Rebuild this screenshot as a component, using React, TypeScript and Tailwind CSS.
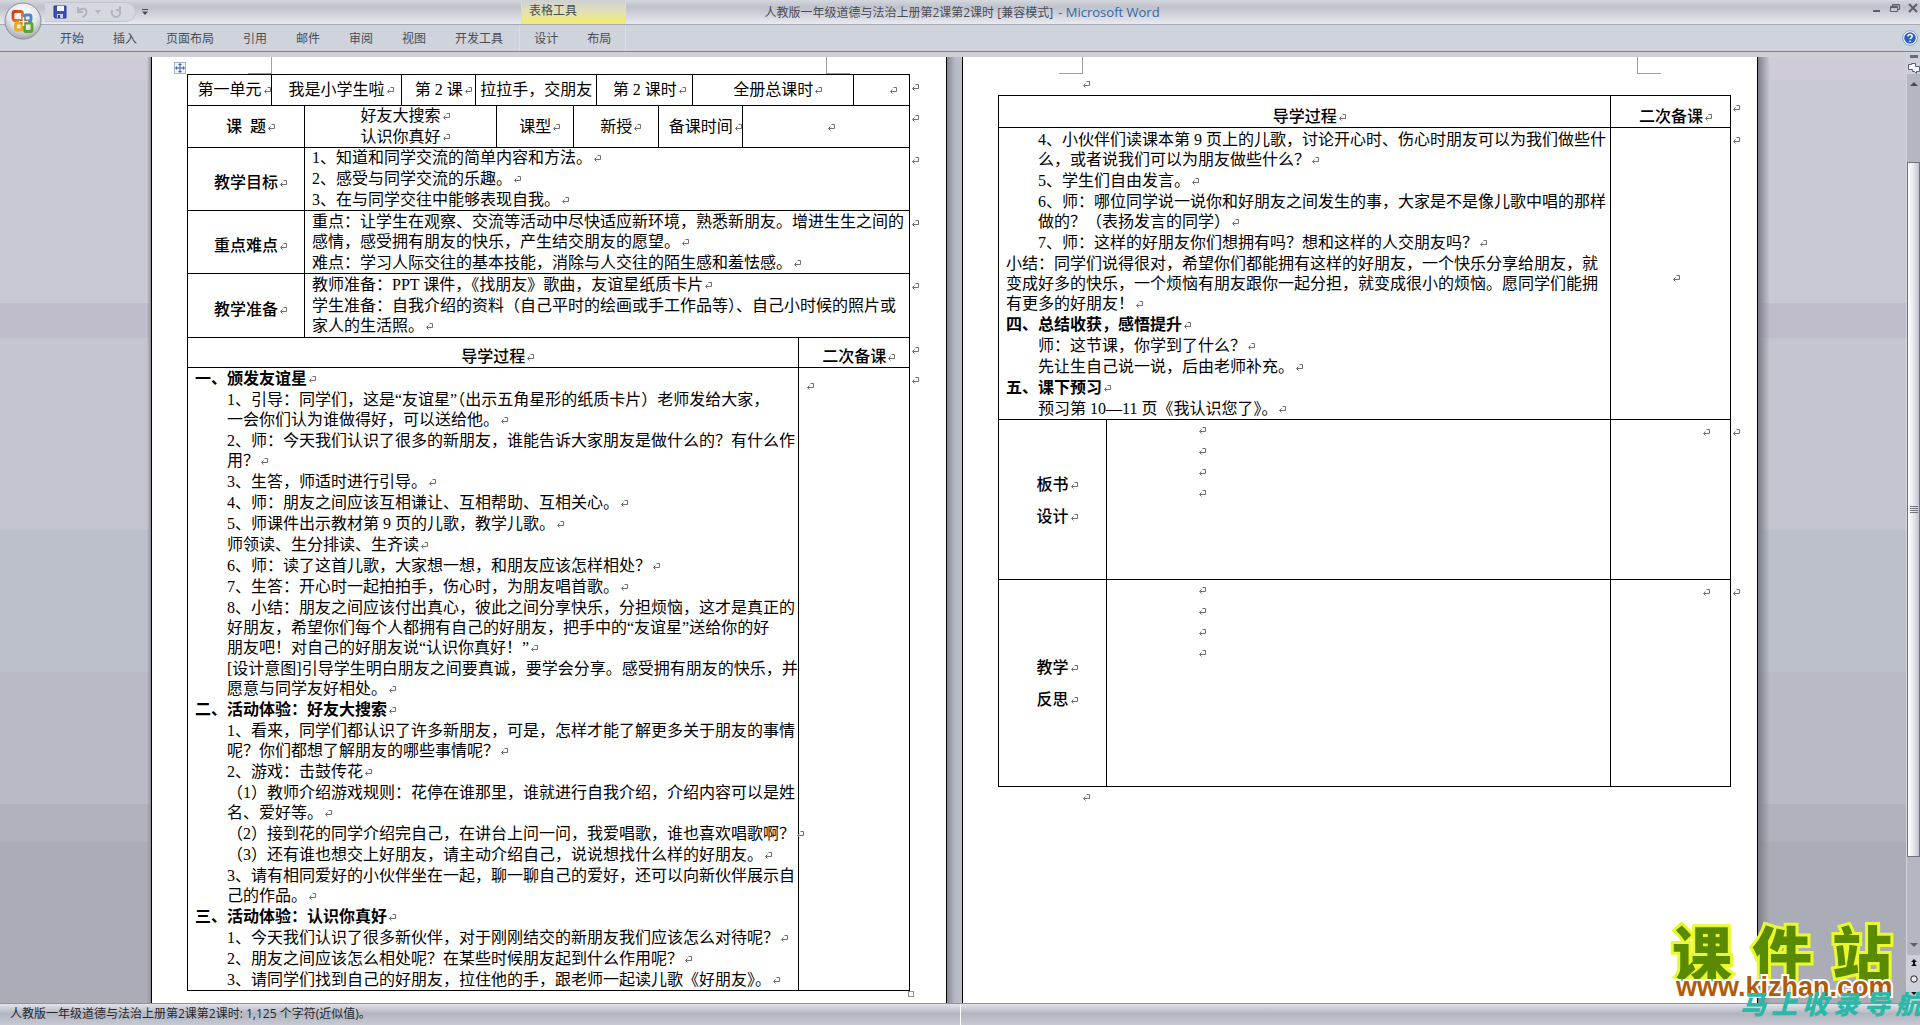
import type { ReactNode } from "react";
import { clsx } from "clsx";

type Paragraph = {
  lines: string[];
  kind?: "heading" | "flush" | "item";
};

const TABS = ["开始", "插入", "页面布局", "引用", "邮件", "审阅", "视图", "开发工具"];
const TABLE_TABS = ["设计", "布局"];

const PROCESS_ONE: Paragraph[] = [
  { kind: "heading", lines: ["一、颁发友谊星"] },
  {
    lines: [
      "1、引导：同学们，这是“友谊星”（出示五角星形的纸质卡片）老师发给大家，",
      "一会你们认为谁做得好，可以送给他。",
    ],
  },
  { lines: ["2、师：今天我们认识了很多的新朋友，谁能告诉大家朋友是做什么的？有什么作", "用？"] },
  { lines: ["3、生答，师适时进行引导。"] },
  { lines: ["4、师：朋友之间应该互相谦让、互相帮助、互相关心。"] },
  { lines: ["5、师课件出示教材第 9 页的儿歌，教学儿歌。"] },
  { lines: ["师领读、生分排读、生齐读"] },
  { lines: ["6、师：读了这首儿歌，大家想一想，和朋友应该怎样相处？"] },
  { lines: ["7、生答：开心时一起拍拍手，伤心时，为朋友唱首歌。"] },
  {
    lines: [
      "8、小结：朋友之间应该付出真心，彼此之间分享快乐，分担烦恼，这才是真正的",
      "好朋友，希望你们每个人都拥有自己的好朋友，把手中的“友谊星”送给你的好",
      "朋友吧！对自己的好朋友说“认识你真好！”",
    ],
  },
  { lines: ["[设计意图]引导学生明白朋友之间要真诚，要学会分享。感受拥有朋友的快乐，并", "愿意与同学友好相处。"] },
  { kind: "heading", lines: ["二、活动体验：好友大搜索"] },
  { lines: ["1、看来，同学们都认识了许多新朋友，可是，怎样才能了解更多关于朋友的事情", "呢？你们都想了解朋友的哪些事情呢？"] },
  { lines: ["2、游戏：击鼓传花"] },
  { lines: ["（1）教师介绍游戏规则：花停在谁那里，谁就进行自我介绍，介绍内容可以是姓", "名、爱好等。"] },
  { lines: ["（2）接到花的同学介绍完自己，在讲台上问一问，我爱唱歌，谁也喜欢唱歌啊？"] },
  { lines: ["（3）还有谁也想交上好朋友，请主动介绍自己，说说想找什么样的好朋友。"] },
  { lines: ["3、请有相同爱好的小伙伴坐在一起，聊一聊自己的爱好，还可以向新伙伴展示自", "己的作品。"] },
  { kind: "heading", lines: ["三、活动体验：认识你真好"] },
  { lines: ["1、今天我们认识了很多新伙伴，对于刚刚结交的新朋友我们应该怎么对待呢？"] },
  { lines: ["2、朋友之间应该怎么相处呢？在某些时候朋友起到什么作用呢？"] },
  { lines: ["3、请同学们找到自己的好朋友，拉住他的手，跟老师一起读儿歌《好朋友》。"] },
];

const PROCESS_TWO: Paragraph[] = [
  { lines: ["4、小伙伴们读课本第 9 页上的儿歌，讨论开心时、伤心时朋友可以为我们做些什", "么，或者说我们可以为朋友做些什么？"] },
  { lines: ["5、学生们自由发言。"] },
  { lines: ["6、师：哪位同学说一说你和好朋友之间发生的事，大家是不是像儿歌中唱的那样", "做的？（表扬发言的同学）"] },
  { lines: ["7、师：这样的好朋友你们想拥有吗？想和这样的人交朋友吗？"] },
  {
    kind: "flush",
    lines: [
      "小结：同学们说得很对，希望你们都能拥有这样的好朋友，一个快乐分享给朋友，就",
      "变成好多的快乐，一个烦恼有朋友跟你一起分担，就变成很小的烦恼。愿同学们能拥",
      "有更多的好朋友！",
    ],
  },
  { kind: "heading", lines: ["四、总结收获，感悟提升"] },
  { lines: ["师：这节课，你学到了什么？"] },
  { lines: ["先让生自己说一说，后由老师补充。"] },
  { kind: "heading", lines: ["五、课下预习"] },
  { lines: ["预习第 10—11 页《我认识您了》。"] },
];

const GOALS: Paragraph[] = [
  { kind: "flush", lines: ["1、知道和同学交流的简单内容和方法。"] },
  { kind: "flush", lines: ["2、感受与同学交流的乐趣。"] },
  { kind: "flush", lines: ["3、在与同学交往中能够表现自我。"] },
];

const KEY_POINTS: Paragraph[] = [
  {
    kind: "flush",
    lines: [
      "重点：让学生在观察、交流等活动中尽快适应新环境，熟悉新朋友。增进生生之间的",
      "感情，感受拥有朋友的快乐，产生结交朋友的愿望。",
    ],
  },
  { kind: "flush", lines: ["难点：学习人际交往的基本技能，消除与人交往的陌生感和羞怯感。"] },
];

const PREPARATION: Paragraph[] = [
  { kind: "flush", lines: ["教师准备：PPT 课件，《找朋友》歌曲，友谊星纸质卡片"] },
  {
    kind: "flush",
    lines: ["学生准备：自我介绍的资料（自己平时的绘画或手工作品等）、自己小时候的照片或", "家人的生活照。"],
  },
];

/* Paragraph mark at the end of every paragraph and cell; takes no width so centred text stays centred */
function Mark() {
  return (
    <svg className="-mr-[9px] ml-px inline-block h-2 w-2 align-baseline text-[#707070]" viewBox="0 0 8 8" aria-hidden="true">
      <path d="M4.5 .5h3v4H2M3.5 2.5l-2 2 2 2M2.5 3.5v2" fill="none" stroke="currentColor" />
    </svg>
  );
}

function Paragraphs({ items }: { items: Paragraph[] }) {
  return (
    <div className="space-y-px pl-[7px] text-left leading-5 whitespace-nowrap">
      {items.map((item) => (
        <p
          key={item.lines[0]}
          className={clsx(item.kind === "heading" && "font-bold", !item.kind && "pl-8")}
        >
          {item.lines.map((line, i) => (
            <span key={line} className="block">
              {line}
              {i === item.lines.length - 1 && <Mark />}
            </span>
          ))}
        </p>
      ))}
    </div>
  );
}

function Cell({ span, className, children }: { span?: number; className?: string; children?: ReactNode }) {
  return (
    <td colSpan={span} className={clsx("border border-black text-center", className ?? "p-0")}>
      {children}
    </td>
  );
}

function HeadCell({ span, className, children }: { span?: number; className?: string; children: ReactNode }) {
  return (
    <th colSpan={span} className={clsx("border border-black text-center font-medium", className ?? "p-0")}>
      {children}
      <Mark />
    </th>
  );
}

/* The mark that stands outside the table at the end of a row */
function RowEnd() {
  return (
    <td className="p-0 text-left align-top">
      <Mark />
    </td>
  );
}

function CropMarks() {
  return (
    <div className="flex h-[17px] justify-between px-24" aria-hidden="true">
      <div className="w-6 border-r border-b border-[#a0a0a0]" />
      <div className="w-6 border-b border-l border-[#a0a0a0]" />
    </div>
  );
}

function Page({ children }: { children: ReactNode }) {
  return (
    <section className="w-[796px] shrink-0 border-x border-black bg-white font-['Liberation_Serif','Noto_Sans_CJK_SC',serif] text-base font-normal text-black">
      <CropMarks />
      {children}
    </section>
  );
}

function PageOne() {
  return (
    <Page>
      <div className="relative w-[774px] pb-2 pl-[35px]">
        <span className="absolute -top-3 left-[22px] flex size-3 items-center justify-center border border-[#a9b4c6] bg-[#eef2f8]">
          <svg className="size-2.5 shrink-0" viewBox="0 0 10 10" aria-hidden="true">
            <path d="M5 1v8M1 5h8" stroke="#3b62a8" />
            <path d="M5 0l2 2H3zM5 10l2-2H3zM0 5l2-2v4zM10 5L8 3v4z" fill="#3b62a8" />
          </svg>
        </span>
        <table className="w-[739px] table-fixed border-collapse">
          <colgroup>
            <col className="w-[84px]" />
            <col className="w-[33px]" />
            <col className="w-[97px]" />
            <col className="w-[74px]" />
            <col className="w-[21px]" />
            <col className="w-[77px]" />
            <col className="w-[23px]" />
            <col className="w-[62px]" />
            <col className="w-[34px]" />
            <col className="w-[50px]" />
            <col className="w-[56px]" />
            <col className="w-[55px]" />
            <col className="w-[56px]" />
            <col className="w-4" />
          </colgroup>
          <tbody>
            <tr className="h-[31px] whitespace-nowrap">
              <Cell>第一单元<Mark /></Cell>
              <Cell span={2}>我是小学生啦<Mark /></Cell>
              <Cell>第 2 课<Mark /></Cell>
              <Cell span={3}>拉拉手，交朋友</Cell>
              <Cell span={2}>第 2 课时<Mark /></Cell>
              <Cell span={3}>全册总课时<Mark /></Cell>
              <Cell className="py-0 pr-0 pl-3"><Mark /></Cell>
              <RowEnd />
            </tr>
            <tr className="h-[42px] whitespace-nowrap">
              <HeadCell span={2}>课&ensp;题</HeadCell>
              <Cell span={3}>
                <div className="space-y-px leading-5">
                  <p>好友大搜索<Mark /></p>
                  <p>认识你真好<Mark /></p>
                </div>
              </Cell>
              <Cell>课型<Mark /></Cell>
              <Cell span={2}>新授<Mark /></Cell>
              <Cell span={2}>备课时间<Mark /></Cell>
              <Cell span={3}><Mark /></Cell>
              <RowEnd />
            </tr>
            <tr className="h-[63px]">
              <HeadCell span={2} className="px-0 pt-2 pb-0">教学目标</HeadCell>
              <Cell span={11}><Paragraphs items={GOALS} /></Cell>
              <RowEnd />
            </tr>
            <tr className="h-[63px]">
              <HeadCell span={2} className="px-0 pt-2 pb-0">重点难点</HeadCell>
              <Cell span={11}><Paragraphs items={KEY_POINTS} /></Cell>
              <RowEnd />
            </tr>
            <tr className="h-16">
              <HeadCell span={2} className="px-0 pt-2 pb-0">教学准备</HeadCell>
              <Cell span={11}><Paragraphs items={PREPARATION} /></Cell>
              <RowEnd />
            </tr>
            <tr className="h-[30px]">
              <HeadCell span={11} className="p-0 align-bottom leading-5">导学过程</HeadCell>
              <HeadCell span={2} className="p-0 align-bottom leading-5">二次备课</HeadCell>
              <RowEnd />
            </tr>
            <tr className="h-[622px]">
              <Cell span={11} className="p-0 pt-px align-top"><Paragraphs items={PROCESS_ONE} /></Cell>
              <Cell span={2} className="p-0 pt-1.5 pl-1.5 text-left align-top"><Mark /></Cell>
              <RowEnd />
            </tr>
          </tbody>
        </table>
        <span className="absolute right-3 bottom-0.5 size-1.5 border border-[#909090]" />
      </div>
    </Page>
  );
}

function EmptyLines() {
  return (
    <div className="space-y-px pl-[90px] text-left leading-5">
      <p><Mark /></p>
      <p><Mark /></p>
      <p><Mark /></p>
      <p><Mark /></p>
    </div>
  );
}

function PageTwo() {
  return (
    <Page>
      <div className="pl-[35px]">
        <p className="h-[21px] pl-[83px] leading-5"><Mark /></p>
        <table className="w-[749px] table-fixed border-collapse">
          <colgroup>
            <col className="w-[108px]" />
            <col className="w-[504px]" />
            <col className="w-[120px]" />
            <col className="w-4" />
          </colgroup>
          <tbody>
            <tr className="h-8">
              <HeadCell span={2} className="p-0 align-bottom leading-5">导学过程</HeadCell>
              <HeadCell className="p-0 align-bottom leading-5">二次备课</HeadCell>
              <RowEnd />
            </tr>
            <tr className="h-[292px]">
              <Cell span={2} className="p-0 pt-0.5 align-top"><Paragraphs items={PROCESS_TWO} /></Cell>
              <Cell className="px-0 pt-2 pb-0"><Mark /></Cell>
              <RowEnd />
            </tr>
            <tr className="h-40">
              <HeadCell className="p-0 pt-0.5 leading-8">
                <p>板书<Mark /></p>
                设计
              </HeadCell>
              <Cell className="p-0 align-top"><EmptyLines /></Cell>
              <Cell className="py-0 pr-5 pl-20 align-top"><Mark /></Cell>
              <RowEnd />
            </tr>
            <tr className="h-[207px]">
              <HeadCell className="p-0 pt-0.5 leading-8">
                <p>教学<Mark /></p>
                反思
              </HeadCell>
              <Cell className="p-0 align-top"><EmptyLines /></Cell>
              <Cell className="py-0 pr-5 pl-20 align-top"><Mark /></Cell>
              <RowEnd />
            </tr>
          </tbody>
        </table>
        <p className="pl-[83px] leading-5"><Mark /></p>
      </div>
    </Page>
  );
}

function OfficeButton() {
  return (
    <button type="button" aria-label="Office 按钮" className="absolute top-0.5 left-1 z-10 size-[38px]">
      <svg viewBox="0 0 38 38">
        <defs>
          <radialGradient id="orb" cx="50%" cy="30%" r="70%">
            <stop offset="0" stopColor="#ffffff" />
            <stop offset="0.6" stopColor="#e4e5ea" />
            <stop offset="1" stopColor="#a3a6b0" />
          </radialGradient>
          <linearGradient id="orange" x1="0" y1="0" x2="1" y2="1">
            <stop offset="0" stopColor="#c93a12" />
            <stop offset="1" stopColor="#f08a2c" />
          </linearGradient>
        </defs>
        <circle cx="19" cy="19" r="18" fill="url(#orb)" stroke="#8b8e98" />
        <g fill="none" strokeWidth="2.8">
          <rect x="9" y="9.500" width="9.500" height="9" rx="2" stroke="url(#orange)" />
          <rect x="20.500" y="13" width="6.500" height="6" rx="1.500" stroke="#4b86c8" />
          <rect x="11.500" y="21" width="6.500" height="7" rx="1.500" stroke="#f0a91c" />
          <rect x="20.500" y="21" width="7.500" height="8.500" rx="1.500" stroke="#5ba332" />
        </g>
        <path d="M15 19.500h9M19.500 15v9" stroke="#f6f6f8" strokeWidth="1.500" />
        <path d="M16 18.500h2.500M20.500 18.500H23M16 21h2.500M20.500 21H23" stroke="#c8581c" />
      </svg>
    </button>
  );
}

function QuickAccess() {
  return (
    <div className="ml-[45px] flex h-5 items-center">
      <div className="flex h-5 w-[91px] items-center rounded-r-full border border-l-0 border-[#c3c5cf] bg-[#d6d8e0] pl-2">
        <button type="button" aria-label="保存">
          <svg className="size-3.5" viewBox="0 0 14 14">
            <path d="M1 1h12v12H2l-1-1z" fill="#3f4fb4" stroke="#2a3690" />
            <path d="M4 1h7v5H4z" fill="#f4f6ff" />
            <path d="M4 9h6v4H4z" fill="#c9cff0" />
            <path d="M5 10h2v3H5z" fill="#2a3690" />
          </svg>
        </button>
        <button type="button" aria-label="撤消" className="ml-2 flex items-center gap-1.5">
          <svg className="size-3.5" viewBox="0 0 14 14">
            <path d="M3 2v5h5M3.500 6.500C6 2.500 12 3 11.500 7c0 2-1.500 4-4 5" fill="none" stroke="#b1b4bf" strokeWidth="2" />
          </svg>
          <svg className="h-1 w-1.5" viewBox="0 0 6 4">
            <path d="M0 0h6L3 4z" fill="#b1b4bf" />
          </svg>
        </button>
        <button type="button" aria-label="恢复" className="ml-2">
          <svg className="size-3.5" viewBox="0 0 14 14">
            <path d="M11 1v4H7M10.500 5c2 4-1 7-3.500 7S1.500 9 3 5" fill="none" stroke="#b1b4bf" strokeWidth="2" />
          </svg>
        </button>
      </div>
      <button type="button" aria-label="自定义快速访问工具栏" className="ml-1.5">
        <svg className="h-1.5 w-1.5" viewBox="0 0 6 6">
          <path d="M0 .5h6" stroke="#4a4c55" />
          <path d="M0 2.500h6L3 6z" fill="#4a4c55" />
        </svg>
      </button>
    </div>
  );
}

function TitleBar() {
  return (
    <header className="grid h-6 grid-cols-[1fr_auto_1fr] items-center bg-linear-to-b from-[#d5d7de] via-[#bfc1cb] via-30% to-[#e9eaf0] text-xs text-[#4a4c55]">
      <div className="flex items-center">
        <QuickAccess />
        <div className="ml-[373px] flex h-6 w-[105px] shrink-0 items-center border-x border-[#dcdcc8] bg-linear-to-b from-[#cfd0d4] via-[#e4e1b4] to-[#f4ee5a] pb-0.5 pl-[7px]">
          表格工具
        </div>
      </div>
      <h1 className="pt-0.5 pl-1 whitespace-nowrap">
        人教版一年级道德与法治上册第2课第2课时 [兼容模式]{" "}
        <span className="pl-0.5 text-[13px] text-[#35689f]">- Microsoft Word</span>
      </h1>
      <div className="flex items-center justify-end gap-2 pr-0.5 pb-2">
        <button type="button" aria-label="最小化">
          <svg className="size-2.5" viewBox="0 0 10 10"><path d="M1 8h7" stroke="#5b5e6b" strokeWidth="2" /></svg>
        </button>
        <button type="button" aria-label="还原">
          <svg className="size-2.5" viewBox="0 0 10 10">
            <path d="M.5 3.500h7v5h-7zM2.500 3V1.500h7v5H8M.5 4.500h7M2.500 2h7" fill="none" stroke="#5b5e6b" />
          </svg>
        </button>
        <button type="button" aria-label="关闭">
          <svg className="size-2.5" viewBox="0 0 10 10"><path d="M1 1l8 8M9 1L1 9" stroke="#5b5e6b" strokeWidth="2" /></svg>
        </button>
      </div>
    </header>
  );
}

function Ribbon() {
  return (
    <nav className="flex h-7 items-center border-t border-b border-t-[#a7aab5] border-b-[#7b8290] bg-[#cfd3dc] pr-0.5 pl-[46px] text-xs text-[#4a4c55]">
      <div className="flex flex-1 items-center gap-px">
        {TABS.map((tab) => (
          <button key={tab} type="button" className="px-3.5 pt-0.5">
            {tab}
          </button>
        ))}
        <div className="ml-px flex h-[26px] items-center gap-px border-x border-[#dfe1cb]">
          {TABLE_TABS.map((tab) => (
            <button key={tab} type="button" className="px-3.5 pt-0.5">
              {tab}
            </button>
          ))}
        </div>
      </div>
      <button type="button" aria-label="帮助">
        <svg className="size-4" viewBox="0 0 16 16">
          <circle cx="8" cy="8" r="7.300" fill="#fff" stroke="#7b9bd0" />
          <circle cx="8" cy="8" r="5.800" fill="#2b5fc0" />
          <path d="M6 6.500c0-2.600 4.200-2.600 4.200-.2 0 1.500-2.100 1.500-2.100 3" fill="none" stroke="#fff" strokeWidth="1.500" />
          <circle cx="8.100" cy="11.300" r=".9" fill="#fff" />
        </svg>
      </button>
    </nav>
  );
}

function ScrollBar() {
  return (
    <div className="flex w-3.5 flex-col items-center border-l border-[#d3d4db] bg-[#b4b6c0]">
      <div className="flex w-full flex-col items-center gap-1 bg-[#cdd0d9] pt-[3px]">
        <span className="h-[3px] w-2 bg-[#6a6c75]" />
        <button type="button" aria-label="标尺" className="flex">
          <svg className="size-3" viewBox="0 0 12 12">
            <path d="M.5 2.500h3v-1h4v3h4v5h-3v2l-2-2h-2v-2h-4z" fill="#f3f5fb" stroke="#56607f" />
          </svg>
        </button>
      </div>
      <button type="button" aria-label="向上滚动" className="mt-2 flex">
        <svg className="h-1 w-2" viewBox="0 0 8 4"><path d="M4 0l4 4H0z" fill="#4a4c55" /></svg>
      </button>
      <div className="flex w-full flex-1 flex-col pt-[76px] pb-[86px]">
        <div className="flex flex-1 flex-col items-center justify-center gap-px border border-[#70727c] bg-linear-to-r from-white via-[#e8e9ef] to-[#c0c2d0]">
          <span className="h-px w-2 bg-[#70727c]" />
          <span className="h-px w-2 bg-[#70727c]" />
          <span className="h-px w-2 bg-[#70727c]" />
          <span className="h-px w-2 bg-[#70727c]" />
        </div>
      </div>
      <button type="button" aria-label="向下滚动" className="mb-2 flex">
        <svg className="h-1 w-2" viewBox="0 0 8 4"><path d="M0 0h8L4 4z" fill="#5b5e6b" /></svg>
      </button>
      <div className="flex w-full flex-col items-center gap-2 bg-[#cdd0d9] pt-1 pb-1">
        <button type="button" aria-label="前一页" className="flex">
          <svg className="size-2" viewBox="0 0 8 8"><path d="M4 0l3 3H1zM4 4l3 3H1zM3 2h2v5H3z" fill="#111" /></svg>
        </button>
        <button type="button" aria-label="选择浏览对象" className="flex">
          <svg className="size-2" viewBox="0 0 8 8"><circle cx="4" cy="4" r="3.200" fill="#e9eaf0" stroke="#222" /></svg>
        </button>
        <button type="button" aria-label="下一页" className="flex">
          <svg className="size-2" viewBox="0 0 8 8"><path d="M4 4l3-3H1zM4 8l3-3H1z" fill="#111" /></svg>
        </button>
      </div>
    </div>
  );
}

function Watermark() {
  return (
    <div className="pointer-events-none absolute right-0 bottom-0 h-[118px] w-[260px] overflow-hidden">
      <p className="flex gap-5 pl-3 font-['Noto_Sans_CJK_SC',sans-serif] text-[60px] leading-[88px] font-black whitespace-nowrap text-[#5a8a00] [-webkit-text-stroke:6px_#eaf92c] [paint-order:stroke]">
        <span>课</span>
        <span>件</span>
        <span>站</span>
      </p>
      <p className="-mt-6 pl-4 font-['Liberation_Sans',sans-serif] text-[27px] leading-8 font-bold text-[#b05a0a] [-webkit-text-stroke:4px_#ffffff] [paint-order:stroke]">
        www.kizhan.com
      </p>
      <p className="-mt-5 flex gap-[5px] pl-20 font-['Noto_Sans_CJK_SC',sans-serif] text-[26px] leading-10 font-black whitespace-nowrap text-[#2ab8a8] italic">
        {Array.from("马上收录导航").map((char) => (
          <span key={char}>{char}</span>
        ))}
      </p>
    </div>
  );
}

export default function App() {
  return (
    <div className="relative flex min-h-screen flex-col overflow-hidden bg-[#cfd0d6] font-['Open_Sans','Noto_Sans_CJK_SC',sans-serif]">
      <OfficeButton />
      <TitleBar />
      <Ribbon />

      {/* Desk with the two pages */}
      <div className="flex flex-1">
        <main className="mt-[5px] flex flex-1 bg-[linear-gradient(to_bottom,#cfccd8_2.4%,#c7cad3_2.4%_26%,#bfbccb_26%_29.7%,#c3c5cf_29.7%_50%,#bcc0ca_50%_65%,#b8bac5_65%_79%,#b0b2bc_79%_83%,#abadb6_83%)] pl-[3px]">
          <div className="flex flex-1 justify-end">
            <div className="w-1 bg-linear-to-r from-transparent to-[#8d9099]" />
          </div>
          <PageOne />
          <div className="w-[15px] bg-linear-to-r from-[#85888f] via-[#b4b6c2] to-[#bfc0cd]" />
          <PageTwo />
          <div className="flex flex-1">
            <div className="w-3 bg-linear-to-r from-[#7b7e85] to-transparent" />
          </div>
        </main>
        <ScrollBar />
      </div>

      <footer className="flex h-[22px] items-center border-t border-[#8f929c] bg-linear-to-b from-[#e3e4ea] via-[#b3b5c0] via-45% to-[#c6c8d2] text-xs text-[#25272e]">
        <p className="h-full flex-1 border-r border-white pl-2.5 leading-5">
          人教版一年级道德与法治上册第2课第2课时: 1,125 个字符(近似值)。
        </p>
        <div className="flex-1 pl-2.5" />
      </footer>
      <Watermark />
    </div>
  );
}
